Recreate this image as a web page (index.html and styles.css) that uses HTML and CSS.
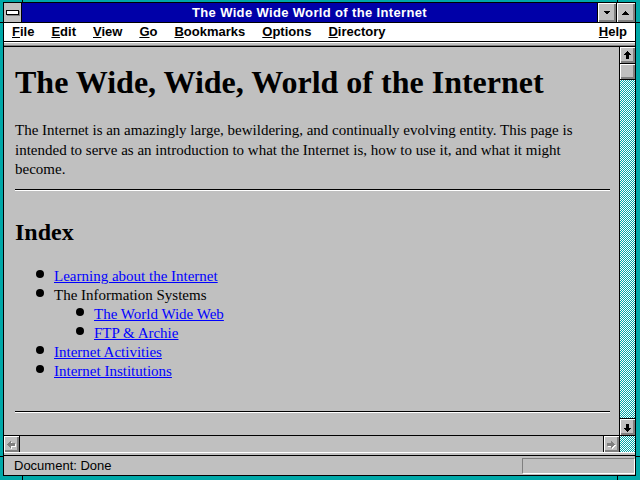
FILE: index.html
```html
<!DOCTYPE html>
<html>
<head>
<meta charset="utf-8">
<title>The Wide Wide World of the Internet</title>
<link rel="stylesheet" href="styles.css">
</head>
<body>
<div class="window">
  <div class="frame">
    <div class="titlebar">
      <div class="sysbtn"><span class="sysbar"></span></div>
      <div class="title">The Wide Wide World of the Internet</div>
      <div class="tbtn"><svg width="18" height="18" viewBox="0 0 18 18"><polygon points="5,7 12,7 8.5,10.5" fill="#000"/></svg></div>
      <div class="tbtn"><svg width="18" height="18" viewBox="0 0 18 18"><polygon points="5,10.5 12,10.5 8.5,7" fill="#000"/></svg></div>
    </div>
    <div class="menubar">
      <span><u>F</u>ile</span>
      <span><u>E</u>dit</span>
      <span><u>V</u>iew</span>
      <span><u>G</u>o</span>
      <span><u>B</u>ookmarks</span>
      <span><u>O</u>ptions</span>
      <span><u>D</u>irectory</span>
      <span class="help"><u>H</u>elp</span>
    </div>
    <div class="strip"></div>
    <div class="main">
      <div class="view">
        <h1>The Wide, Wide, World of the Internet</h1>
        <p>The Internet is an amazingly large, bewildering, and continually evolving entity. This page is intended to serve as an introduction to what the Internet is, how to use it, and what it might become.</p>
        <hr>
        <h2>Index</h2>
        <ul>
          <li><a href="#">Learning about the Internet</a></li>
          <li>The Information Systems
            <ul>
              <li><a href="#">The World Wide Web</a></li>
              <li><a href="#">FTP &amp; Archie</a></li>
            </ul>
          </li>
          <li><a href="#">Internet Activities</a></li>
          <li><a href="#">Internet Institutions</a></li>
        </ul>
        <hr class="hr2">
      </div>
      <div class="vscroll">
        <div class="sbtn sb-up"><svg width="15" height="15" viewBox="0 0 15 15"><polygon points="7.5,3 11.5,7 9,7 9,11 6,11 6,7 3.5,7" fill="#000"/></svg></div>
        <div class="thumb"></div>
        <div class="track"></div>
        <div class="sbtn sb-down"><svg width="15" height="15" viewBox="0 0 15 15"><polygon points="7.5,12 11.5,8 9,8 9,4 6,4 6,8 3.5,8" fill="#000"/></svg></div>
      </div>
    </div>
    <div class="hscroll">
      <div class="sbtn sb-left"><svg width="15" height="15" viewBox="0 0 15 15"><polygon points="4,8.5 8,4.5 8,7 12,7 12,10 8,10 8,12.5" fill="#fff"/><polygon points="3,7.5 7,3.5 7,6 11,6 11,9 7,9 7,11.5" fill="#808080"/></svg></div>
      <div class="htrack"></div>
      <div class="sbtn sb-right"><svg width="15" height="15" viewBox="0 0 15 15"><polygon points="12,8.5 8,4.5 8,7 4,7 4,10 8,10 8,12.5" fill="#fff"/><polygon points="11,7.5 7,3.5 7,6 3,6 3,9 7,9 7,11.5" fill="#808080"/></svg></div>
      <div class="corner"></div>
    </div>
    <div class="sep"></div>
    <div class="status">
      <span class="status-text">Document: Done</span>
      <span class="status-box"></span>
    </div>
  </div>
  <span class="mark mark-tl-h"></span>
  <span class="mark mark-tr-h"></span>
  <span class="mark mark-bl-h"></span>
  <span class="mark mark-br-h"></span>
  <span class="mark mark-tl-v"></span>
  <span class="mark mark-tr-v"></span>
  <span class="mark mark-bl-v"></span>
  <span class="mark mark-br-v"></span>
</div>
</body>
</html>
```

FILE: styles.css
```css
* {
  box-sizing: border-box;
  margin: 0;
  padding: 0;
}

body {
  margin: 0;
  width: 640px;
  height: 480px;
  overflow: hidden;
  background: #00a8a8;
}

.window {
  position: relative;
  width: 640px;
  height: 480px;
  background: #00a8a8;
  padding: 2px 4px 4px 3px;
}

.frame {
  height: 100%;
  border: 1px solid #000;
  background: #c0c0c0;
  display: flex;
  flex-direction: column;
}

/* title bar */
.titlebar {
  flex: 0 0 20px;
  display: flex;
  background: #0000a8;
  border-bottom: 1px solid #000;
}

.sysbtn {
  width: 18px;
  background: #c0c0c0;
  border-right: 1px solid #000;
  display: flex;
  align-items: center;
  justify-content: center;
}

.sysbar {
  display: block;
  width: 13px;
  height: 5px;
  background: #fff;
  border: 1px solid #000;
  box-shadow: 1px 1px 0 #808080;
  margin-top: -1px;
}

.title {
  flex: 1;
  color: #fff;
  font: bold 13px/19px "Liberation Sans", Arial, sans-serif;
  letter-spacing: 0.35px;
  text-align: center;
}

.tbtn {
  width: 19px;
  border-left: 1px solid #000;
  background: #c0c0c0;
  box-shadow: inset 1px 1px #fff, inset -1px -1px #808080, inset -2px -2px #808080;
  display: flex;
  align-items: center;
  justify-content: center;
}

.tbtn svg {
  display: block;
  shape-rendering: crispEdges;
}

/* menu bar */
.menubar {
  flex: 0 0 19px;
  display: flex;
  gap: 17px;
  padding: 0 8px 0 8px;
  background: #fff;
  border-bottom: 1px solid #000;
  font: bold 13px/18px "Liberation Sans", Arial, sans-serif;
  color: #000;
}

.menubar u {
  text-underline-offset: 1px;
}

.help {
  margin-left: auto;
}

.strip {
  flex: 0 0 5px;
  background: #c0c0c0;
  border-top: 1px solid #fff;
  border-bottom: 1px solid #000;
  box-shadow: inset 0 -1px #808080;
}

/* main document area */
.main {
  flex: 1 1 auto;
  display: flex;
  min-height: 0;
}

.view {
  flex: 1;
  overflow: hidden;
  padding: 17px 9px 0 11px;
  font-family: "Liberation Serif", "Times New Roman", serif;
  color: #000;
}

.view h1 {
  font: bold 32px/36px "Liberation Serif", "Times New Roman", serif;
  margin: 0 0 21px;
}

.view p {
  font-size: 15px;
  line-height: 19.5px;
}

.view hr {
  border: 0;
  border-top: 1px solid #000;
  border-bottom: 1px solid #fff;
  height: 2px;
  margin: 9px 0 27px;
}

.view hr.hr2 {
  margin-top: 30px;
}

.view h2 {
  font: bold 24px/28px "Liberation Serif", "Times New Roman", serif;
  margin: 0 0 21px;
}

.view ul {
  list-style: none;
  padding-left: 21px;
  font-size: 15px;
  line-height: 19px;
}

.view ul ul {
  padding-left: 40px;
}

.view li::before {
  content: "";
  display: inline-block;
  width: 8px;
  height: 8px;
  border-radius: 50%;
  background: #000;
  margin: 0 10px 3px 0;
}

.view a {
  color: #0000ff;
  text-decoration: underline;
}

/* scroll bars */
.vscroll {
  flex: 0 0 16px;
  border-left: 1px solid #000;
  display: flex;
  flex-direction: column;
}

.sbtn {
  background: #c0c0c0;
  box-shadow: inset 1px 1px #fff, inset -1px -1px #808080, inset -2px -2px #808080;
  display: flex;
  align-items: center;
  justify-content: center;
}

.sbtn svg {
  display: block;
  shape-rendering: crispEdges;
}

.sb-up {
  flex: 0 0 17px;
  border-bottom: 1px solid #000;
}

.thumb {
  flex: 0 0 16px;
  background: #c0c0c0;
  border-bottom: 1px solid #000;
  box-shadow: inset 1px 1px #fff, inset -1px -1px #808080, inset -2px -2px #808080;
}

.track,
.corner {
  background: repeating-conic-gradient(#00a8a8 0 25%, #ffffff 0 50%) 0 0 / 2px 2px;
}

.track {
  flex: 1;
}

.sb-down {
  flex: 0 0 17px;
  border-top: 1px solid #000;
}

.hscroll {
  flex: 0 0 17px;
  display: flex;
  border-top: 1px solid #000;
}

.sb-left {
  flex: 0 0 16px;
  border-right: 1px solid #000;
}

.htrack {
  flex: 1;
  background: #c0c0c0;
}

.sb-right {
  flex: 0 0 17px;
  border-left: 1px solid #000;
  border-right: 1px solid #000;
}

.corner {
  flex: 0 0 15px;
}

.sep {
  flex: 0 0 4px;
  background: #c0c0c0;
  border-top: 1px solid #fff;
  border-bottom: 1px solid #000;
}

/* status bar */
.status {
  flex: 0 0 18px;
  display: flex;
  align-items: flex-start;
  padding-left: 10px;
  font: 13px/18px "Liberation Sans", Arial, sans-serif;
  color: #000;
}

.status-text {
  padding-top: 1px;
}

.status-box {
  margin: 2px 0 0 auto;
  width: 113px;
  height: 16px;
  border-top: 1px solid #808080;
  border-left: 1px solid #808080;
  border-bottom: 1px solid #fff;
  border-right: 1px solid #fff;
}

/* resize-corner marks on the frame */
.mark {
  position: absolute;
  background: #000;
}

.mark-tl-h, .mark-tr-h, .mark-bl-h, .mark-br-h {
  height: 1px;
  width: 3px;
}

.mark-tl-h { left: 0; top: 22px; }
.mark-bl-h { left: 0; top: 456px; }
.mark-tr-h { right: 0; top: 22px; width: 4px; }
.mark-br-h { right: 0; top: 456px; width: 4px; }

.mark-tl-v, .mark-tr-v, .mark-bl-v, .mark-br-v {
  width: 1px;
}

.mark-tl-v { left: 22px; top: 0; height: 2px; }
.mark-tr-v { left: 617px; top: 0; height: 2px; }
.mark-bl-v { left: 22px; bottom: 0; height: 4px; }
.mark-br-v { left: 617px; bottom: 0; height: 4px; }
```
